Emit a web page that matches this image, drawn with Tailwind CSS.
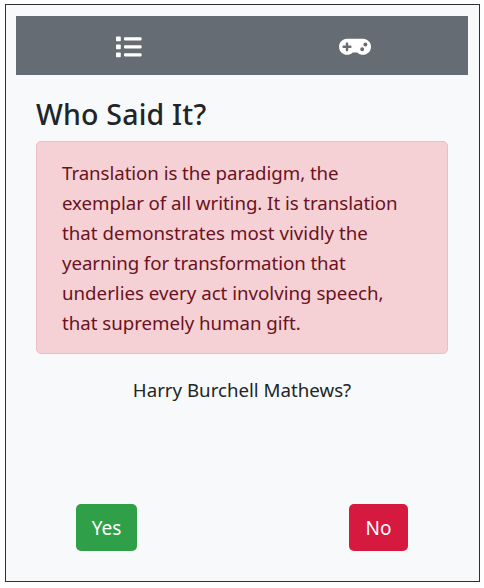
<!DOCTYPE html>
<html lang="en">
<head>
<meta charset="utf-8">
<title>Who Said It?</title>
<script src="https://cdn.jsdelivr.net/npm/@tailwindcss/browser@4"></script>
</head>
<body class="bg-[#fdfefd] pl-[5px] pt-1 h-[588px] overflow-hidden font-['Noto_Sans','Open_Sans',sans-serif] text-[#212529]">
<main class="w-[475px] h-[578px] border border-[#2b3035] bg-[#f7f9fb] px-2.5 pt-[11px] flex flex-col">
  <nav class="grid grid-cols-2 w-[452px] h-[59px] bg-[#656c73] text-white items-center justify-items-center">
    <svg class="w-[25.6px] h-[25.6px] mt-[2px]" viewBox="0 0 512 512" fill="currentColor"><path d="M80 368H16a16 16 0 0 0-16 16v64a16 16 0 0 0 16 16h64a16 16 0 0 0 16-16v-64a16 16 0 0 0-16-16zm0-320H16A16 16 0 0 0 0 64v64a16 16 0 0 0 16 16h64a16 16 0 0 0 16-16V64a16 16 0 0 0-16-16zm0 160H16a16 16 0 0 0-16 16v64a16 16 0 0 0 16 16h64a16 16 0 0 0 16-16v-64a16 16 0 0 0-16-16zm416 176H176a16 16 0 0 0-16 16v32a16 16 0 0 0 16 16h320a16 16 0 0 0 16-16v-32a16 16 0 0 0-16-16zm0-320H176a16 16 0 0 0-16 16v32a16 16 0 0 0 16 16h320a16 16 0 0 0 16-16V80a16 16 0 0 0-16-16zm0 160H176a16 16 0 0 0-16 16v32a16 16 0 0 0 16 16h320a16 16 0 0 0 16-16v-32a16 16 0 0 0-16-16z"/></svg>
    <svg class="w-8 h-[25.6px] mt-[2px]" viewBox="0 0 640 512" fill="currentColor"><path d="M480.07 96H160a160 160 0 1 0 114.24 272h91.5A160 160 0 1 0 480.07 96zM248 268a12 12 0 0 1-12 12h-52v52a12 12 0 0 1-12 12h-24a12 12 0 0 1-12-12v-52H84a12 12 0 0 1-12-12v-24a12 12 0 0 1 12-12h52v-52a12 12 0 0 1 12-12h24a12 12 0 0 1 12 12v52h52a12 12 0 0 1 12 12zm216 76a40 40 0 1 1 40-40 40 40 0 0 1-40 40zm64-96a40 40 0 1 1 40-40 40 40 0 0 1-40 40z"/></svg>
  </nav>
  <div class="px-5 pt-[21px] w-[452px]">
    <h1 class="text-[28.5px] leading-[36px] font-medium tracking-[0.2px] whitespace-nowrap"><span>Who Said It?</span></h1>
    <blockquote class="mt-[9px] h-[213px] rounded-[5px] border border-[#f0bcc4] bg-[#f5d0d4] text-[#6a1222] pl-[25px] pt-4 text-[18.7px] leading-[30px] font-normal whitespace-nowrap">
      <span class="tracking-[-0.06px]">Translation is the paradigm, the</span><br>
      <span class="tracking-[-0.05px]">exemplar of all writing. It is translation</span><br>
      <span class="tracking-[0.03px]">that demonstrates most vividly the</span><br>
      <span class="tracking-[-0.08px]">yearning for transformation that</span><br>
      <span>underlies every act involving speech,</span><br>
      <span class="tracking-[-0.03px]">that supremely human gift.</span>
    </blockquote>
    <p class="mt-[21px] text-center text-[18.7px] leading-[30px]"><span>Harry Burchell Mathews?</span></p>
    <div class="mt-[99px] px-10 flex justify-between text-white text-[19px]">
      <button class="w-[61px] h-[47px] pt-0.5 rounded-[5px] bg-[#2f9f48]"><span>Yes</span></button>
      <button class="w-[59px] h-[47px] pt-0.5 rounded-[5px] bg-[#d61a3f]"><span>No</span></button>
    </div>
  </div>
</main>
</body>
</html>
